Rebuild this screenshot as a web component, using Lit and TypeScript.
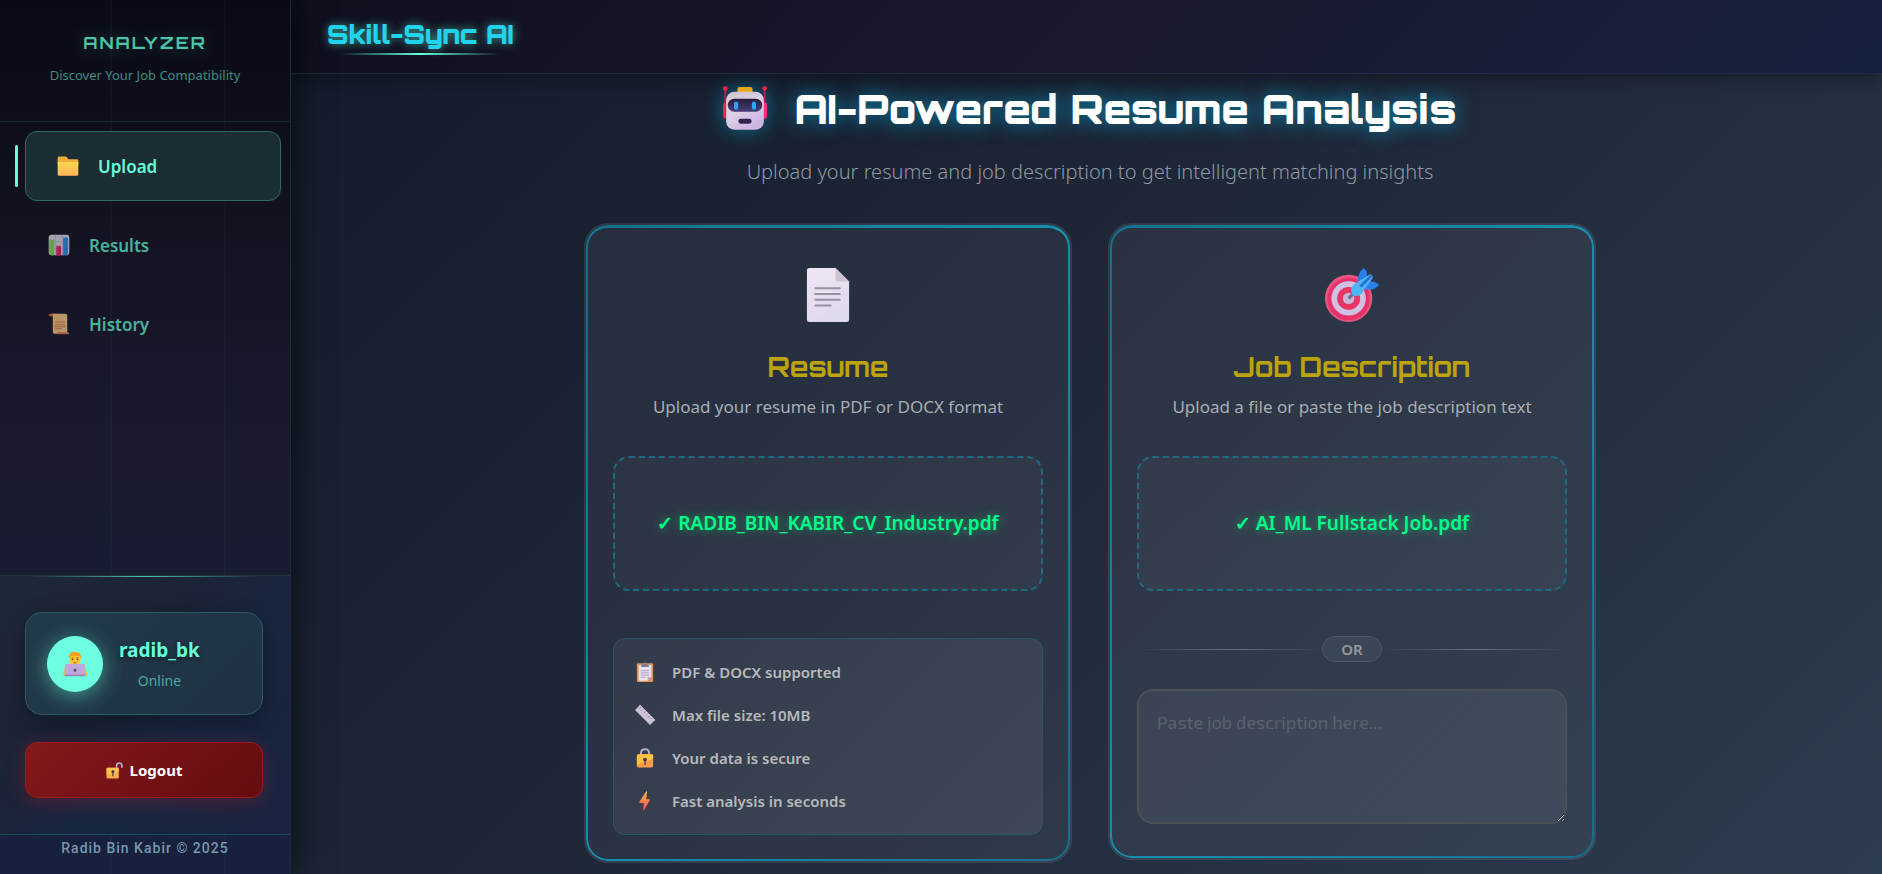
import { LitElement, html, css, svg } from "lit";
import { customElement, property, state } from "lit/decorators.js";
import { classMap } from "lit/directives/class-map.js";

const glyphs: Record<string, unknown> = {
  folder: svg`
    <defs><linearGradient id="fo" x1="0" y1="0" x2="0" y2="1"><stop offset="0" stop-color="#ffd84a"/><stop offset="1" stop-color="#ffb45c"/></linearGradient></defs>
    <path d="M1 4q0-2 2-2h9q1.500 0 2.500 1.200L16.500 6H29q2 0 2 2v6H1z" fill="#f3ab3a"/>
    <path d="M1 10h30v18.500q0 1.500-1.500 1.500h-27Q1 30 1 28.500z" fill="url(#fo)"/>`,
  chart: svg`
    <rect x="1" y="1" width="30" height="30" rx="4" fill="#d6cfe0"/>
    <path d="M1 11h30M1 21h30M11 1v30M21 1v30" stroke="#b3aac0" stroke-width="1"/>
    <path d="M2 10q0-2 2-2h3q2 0 2 2v21H5q-3 0-3-3z" fill="#7fcf57"/>
    <path d="M12 19q0-2 2-2h3q2 0 2 2v12h-7z" fill="#e0246a"/>
    <path d="M22 7q0-2 2-2h3q2 0 2 2v21q0 3-3 3h-4z" fill="#2a8be0"/>`,
  scroll: svg`
    <rect x="1" y="1" width="14" height="4" rx="2" fill="#c8663d"/>
    <path d="M5 1h20q3 0 3 3v26H9q-2 0-2-2V4q0-2-2-3z" fill="#f1c07d"/>
    <path d="M10 13h15M10 17h15M10 20h15M10 23h10" stroke="#c77a4a" stroke-width="1.600"/>
    <path d="M15 28h14q2 0 2 1.500T29 31H12q3-.500 3-3z" fill="#d2754c"/>`,
  coder: svg`
    <path d="M1 30q0-9 8-11h14q8 2 8 11z" fill="#f7b928"/>
    <ellipse cx="16" cy="10" rx="7" ry="8" fill="#ffc52e"/>
    <path d="M8.500 10Q7.500 1 16 1t7.500 9l-2-4H11z" fill="#f3a11d"/>
    <path d="M11.500 8.500h3M17.500 8.500h3" stroke="#8a5a24" stroke-width="1"/>
    <circle cx="13" cy="10.500" r="1" fill="#5d3b33"/><circle cx="19" cy="10.500" r="1" fill="#5d3b33"/>
    <path d="M13.500 14h5q-2.500 2.500-5 0" fill="#d6303d"/>
    <rect x="3.500" y="16" width="25" height="14.500" rx="1.500" fill="#bfa9d8"/>
    <rect x="3" y="29" width="26" height="2" rx="1" fill="#9a86b8"/>
    <circle cx="16" cy="23.500" r="2" fill="#584a72"/>`,
  unlock: svg`
    <path d="M20 11V7q0-5 5-5t5 5v4" fill="none" stroke="#b9b2c8" stroke-width="3"/>
    <rect x="1" y="11" width="23" height="20" rx="2.500" fill="#fdae4a"/>
    <path d="M1 13.500Q1 11 3.500 11h18q2.500 0 2.500 2.500V18L1 24z" fill="#ffc24b"/>
    <circle cx="13" cy="18.500" r="2.800" fill="#46304f"/><path d="M12 19h2v8h-2z" fill="#46304f"/>`,
  lock: svg`
    <path d="M9.500 13V8q0-6 6.500-6t6.500 6v5" fill="none" stroke="#b8aecb" stroke-width="3"/>
    <rect x="3" y="10" width="26" height="21" rx="2.500" fill="#fb9c4d"/>
    <path d="M3 12.500Q3 10 5.500 10h21q2.500 0 2.500 2.500V17L3 27z" fill="#ffc044"/>
    <circle cx="16" cy="18.500" r="3" fill="#46304f"/><path d="M15 19h2v8h-2z" fill="#46304f"/>`,
  robot: svg`
    <defs>
      <linearGradient id="rb" x1="0" y1="0" x2=".6" y2="1"><stop offset="0" stop-color="#d3cbd3"/><stop offset=".5" stop-color="#ded2e6"/><stop offset="1" stop-color="#cdb4e2"/></linearGradient>
      <linearGradient id="rv" x1="0" y1="0" x2="0" y2="1"><stop offset="0" stop-color="#2b1a3c"/><stop offset="1" stop-color="#464079"/></linearGradient>
    </defs>
    <path d="M1.700 1v13M30.300 1v13" stroke="#b3204e" stroke-width="1.400"/>
    <circle cx="1.700" cy="1" r="1.700" fill="#f0284e"/><circle cx="30.300" cy="1" r="1.700" fill="#f0284e"/>
    <rect x="0" y="11" width="4" height="12" rx="2" fill="#e8244f"/><rect x="28" y="11" width="4" height="12" rx="2" fill="#fb2f78"/>
    <rect x="10.500" y="0" width="11" height="6" rx="1.500" fill="#f5b21d"/>
    <rect x="2.300" y="3.500" width="27.400" height="27.500" rx="6" fill="url(#rb)"/>
    <rect x="3.500" y="8.500" width="25" height="9.500" rx="4.700" fill="url(#rv)"/>
    <rect x="8" y="10.500" width="3" height="6" rx="1.500" fill="#2aa5f5"/><rect x="21" y="10.500" width="3" height="6" rx="1.500" fill="#2aa5f5"/>
    <rect x="11.200" y="23" width="9.600" height="3.700" rx="1.800" fill="#33224a"/>`,
  page: svg`
    <defs><linearGradient id="pg" x1="0" y1="0" x2=".3" y2="1"><stop offset="0" stop-color="#efe6f4"/><stop offset="1" stop-color="#e0d8ec"/></linearGradient></defs>
    <path d="M3.500 1.500Q3.500 0 5 0h15.500L28.500 8v22.500q0 1.500-1.500 1.500H5q-1.500 0-1.500-1.500z" fill="url(#pg)"/>
    <path d="M20.500 0L28.500 8H22q-1.500 0-1.500-1.500z" fill="#cbc3d2"/>
    <path d="M8.500 12h14.500M8.500 15.400h14.500M8.500 18.800h14.500M8.500 22.200h9" stroke="#9990a3" stroke-width="1.200" stroke-linecap="round"/>`,
  target: svg`
    <circle cx="14" cy="18" r="14" fill="#e85580"/><circle cx="14" cy="18.400" r="12.600" fill="#e5326a"/>
    <circle cx="14" cy="18" r="10.200" fill="#cfc1e2"/><circle cx="14" cy="18" r="6.800" fill="#e83363"/>
    <circle cx="14" cy="18" r="3.400" fill="#c7b5d6"/>
    <path d="M14 18l4-4" stroke="#7b6b8e" stroke-width="2"/>
    <path d="M19.500 8.500Q19 3 23 0q2 1.500 2 5zM23 12q5 2.500 9-2-2.500-2.500-6-2z" fill="#2a7fe8"/>
    <path d="M15.500 13.500Q15 11 19 8.500L27 3.500 28.500 5.500 22.500 14Q20 17.500 17 16.500 15.700 15.500 15.500 13.500z" fill="#4fb4f3"/>
    <path d="M21 11l6.500-6.500" stroke="#256fd8" stroke-width="1.600"/>`,
  clipboard: svg`
    <rect x="3" y="2" width="26" height="30" rx="1.500" fill="#e0935c"/>
    <path d="M6 5h20v19l-6 6H6z" fill="#ece4f4"/><path d="M26 24l-6 6v-6z" fill="#c9a6a0"/>
    <path d="M9 14h14M9 17.500h14M9 21h14M9 24.500h8" stroke="#9d93ab" stroke-width="1.300"/>
    <path d="M10 8V4h3.500q0-3.500 2.500-3.500T18.500 4H22v4z" fill="#857b90"/>`,
  ruler: svg`
    <path d="M0 8L8 0 32 24 24 32z" fill="#c9c2d3"/>
    <path d="M8 0L32 24 30.500 25.500 6.500 1.500z" fill="#d9d3e2"/>
    <path d="M10 3l-3 3M13.500 6.500L11.500 8.500M17 10l-3 3M20.500 13.500l-2 2M24 17l-3 3M27.500 20.500l-2 2" stroke="#8b68d8" stroke-width="1.500"/>`,
  bolt: svg`
    <defs><linearGradient id="bo" x1="0" y1="0" x2="0" y2="1"><stop offset="0" stop-color="#ffb54a"/><stop offset=".5" stop-color="#ff8348"/><stop offset="1" stop-color="#f5425a"/></linearGradient></defs>
    <path d="M18 .5q1.500-.8 1.300.8L18 13h5q1.500 0 .8 1.300L14 31.500q-1.200 1-1-.7L14 19H7.500q-1.500 0-.7-1.300z" fill="url(#bo)"/>`,
};

@customElement("emoji-icon")
export class EmojiIcon extends LitElement {
  static styles = css`
    :host { display: block; flex: none; }
    .glyph { display: block; width: 100%; height: 100%; overflow: visible; }
  `;
  @property() name = "";
  render() {
    return html`<svg class="glyph" viewBox="0 0 32 32" aria-hidden="true">${glyphs[this.name]}</svg>`;
  }
}

@customElement("upload-card")
export class UploadCard extends LitElement {
  static styles = css`
    :host { display: block; }
    .card {
      position: relative;
      box-sizing: border-box;
      padding: 43px 27px 26px;
      border: 2px solid rgba(255, 255, 255, 0.05);
      border-radius: 24px;
      background: linear-gradient(135deg, rgba(255, 255, 255, 0.06), rgba(255, 255, 255, 0.05));
      text-align: center;
    }
    .ring {
      position: absolute;
      inset: 0;
      padding: 3px 2px 2px;
      border-radius: 22px;
      background: linear-gradient(45deg, #1590ae, #166c8a 50%, #1590ae);
      mask: linear-gradient(#000 0 0) content-box exclude, linear-gradient(#000 0 0);
      pointer-events: none;
    }
    .icon { width: 54px; height: 54px; margin: 0 auto 24px; }
    .title {
      margin: 0;
      color: #bda30b;
      font: 700 27px/42px Orbitron, "DejaVu Sans", sans-serif;
    }
    .hint {
      margin: 6px 0 36px;
      color: #a9adb3;
      font-size: 17px;
      line-height: 26px;
    }
    .drop {
      display: flex;
      align-items: center;
      justify-content: center;
      box-sizing: border-box;
      min-height: 135px;
      padding: 15px 16px 17px;
      border: 2px dashed #1f6a83;
      border-radius: 16px;
      background: rgba(255, 255, 255, 0.03);
      color: #00ff88;
      font-size: 19px;
      font-weight: 600;
      text-shadow: 0 0 10px rgba(0, 255, 136, 0.5);
      cursor: pointer;
    }
    .file { position: absolute; width: 1px; height: 1px; opacity: 0; }
  `;
  @property() icon = "";
  @property() heading = "";
  @property() hint = "";
  @property() file = "";

  private pick(event: Event) {
    const chosen = (event.target as HTMLInputElement).files?.[0];
    if (chosen) this.file = chosen.name;
  }

  render() {
    return html`
      <section class="card">
        <div class="ring"></div>
        <emoji-icon class="icon" name=${this.icon}></emoji-icon>
        <h2 class="title">${this.heading}</h2>
        <p class="hint">${this.hint}</p>
        <label class="drop">
          <input class="file" type="file" accept=".pdf,.docx" @change=${this.pick} />
          <span>✓ ${this.file}</span>
        </label>
        <slot></slot>
      </section>
    `;
  }
}

@customElement("app-root")
export class AppRoot extends LitElement {
  static styles = css`
    :host {
      display: flex;
      height: 100vh;
      overflow: hidden;
      background: linear-gradient(135deg, #101928, #1d2738 50%, #2e3c4f);
      color: #b5b8bd;
      font-family: "Segoe UI", "Noto Sans", sans-serif;
    }
    a { text-decoration: none; }

    .sidebar {
      position: relative;
      z-index: 3;
      display: flex;
      flex: none;
      flex-direction: column;
      box-sizing: border-box;
      width: 291px;
      border-right: 1px solid #1b2c35;
      background: linear-gradient(180deg, #0a0a14, #1a1a2e 50%, #16213e);
      box-shadow: 4px 0 30px rgba(0, 0, 0, 0.6);
    }
    .lines {
      position: absolute;
      inset: 0;
      background:
        linear-gradient(rgba(100, 255, 218, 0.03) 0 0) 110px 0 / 2px 100% no-repeat,
        linear-gradient(rgba(100, 255, 218, 0.03) 0 0) 224px 0 / 1px 100% no-repeat;
      pointer-events: none;
    }
    .brand {
      box-sizing: border-box;
      height: 122px;
      padding: 30px 16px 0;
      border-bottom: 1px solid #182a30;
      text-align: center;
    }
    .brand-name {
      margin: 0;
      color: #4cc4aa;
      font: 700 17px/26px Orbitron, "DejaVu Sans", sans-serif;
      letter-spacing: 2px;
      text-shadow: 0 0 20px rgba(100, 255, 218, 0.3);
    }
    .brand-line {
      margin: 8px 0 0;
      color: #3c8e81;
      font-size: 13px;
      line-height: 22px;
    }
    .nav {
      display: flex;
      flex: 1;
      flex-direction: column;
      gap: 9px;
      padding: 9px 18px 0 16px;
    }
    .item {
      position: relative;
      display: flex;
      align-items: center;
      gap: 19px;
      box-sizing: border-box;
      height: 70px;
      padding: 0 31px;
      border: 1px solid transparent;
      border-radius: 12px;
      color: #48b39c;
      font-size: 17px;
      font-weight: 600;
    }
    .item-icon { width: 22px; height: 22px; opacity: 0.75; }
    .active {
      border-color: #2d6c63;
      background: #1c2d34;
      color: #64ffda;
      transform: translateX(9px);
    }
    .active .item-icon { opacity: 1; }
    .active::before {
      content: "";
      position: absolute;
      top: 13px;
      bottom: 13px;
      left: -11px;
      width: 3px;
      border-radius: 2px;
      background: #64ffda;
    }
    .account {
      position: relative;
      padding: 36px 27px 36px 25px;
      border-top: 1px solid #27323f;
      background: linear-gradient(135deg, #1e2937, #1b2338 40%, #18263f 60%, #1a2340);
    }
    .account::before {
      content: "";
      position: absolute;
      top: 0;
      right: 10%;
      left: 10%;
      height: 1px;
      background: linear-gradient(90deg, transparent, #4cc4aa, transparent);
    }
    .profile {
      display: flex;
      align-items: center;
      gap: 16px;
      box-sizing: border-box;
      height: 103px;
      padding: 0 21px;
      border: 1px solid #2b5a61;
      border-radius: 17px;
      background: linear-gradient(135deg, #223b4b, #1f3145);
      box-shadow: 0 8px 24px rgba(0, 0, 0, 0.3);
    }
    .avatar {
      display: grid;
      place-items: center;
      flex: none;
      width: 56px;
      height: 56px;
      border-radius: 50%;
      background: #6dffe0;
      box-shadow: 0 4px 20px rgba(100, 255, 218, 0.5);
    }
    .avatar-icon { width: 26px; height: 26px; }
    .who { text-align: center; }
    .user { color: #64ffda; font-size: 19px; font-weight: 700; line-height: 30px; text-shadow: 0 2px 4px rgba(0, 0, 0, 0.5); }
    .status { color: #49aa9b; font-size: 14px; line-height: 24px; margin-top: 4px; }
    .logout {
      display: flex;
      align-items: center;
      justify-content: center;
      gap: 7px;
      width: 100%;
      height: 56px;
      margin-top: 27px;
      border: 1px solid #981a1d;
      border-radius: 12px;
      background: linear-gradient(135deg, #83191c, #650c10);
      box-shadow: 0 4px 20px rgba(200, 30, 50, 0.3);
      color: #fff;
      font: 700 15px/24px "Segoe UI", "Noto Sans", sans-serif;
      cursor: pointer;
    }
    .logout-icon { width: 17px; height: 17px; }
    .credit {
      box-sizing: border-box;
      height: 40px;
      padding-top: 1px;
      border-top: 1px solid #21495d;
      background: #17203d;
      color: #7798ad;
      font: 500 14px/24px Roboto, sans-serif;
      letter-spacing: 1px;
      text-align: center;
    }

    .page { display: flex; flex: 1; flex-direction: column; min-width: 0; }
    .topbar {
      position: relative;
      z-index: 2;
      flex: none;
      box-sizing: border-box;
      height: 74px;
      padding: 15px 36px 0;
      border-bottom: 1px solid #1d2d3b;
      background: linear-gradient(135deg, #0f0f1e, #1a1a2e 50%, #16213e);
      box-shadow: 0 4px 20px rgba(0, 0, 0, 0.4);
    }
    .logo {
      display: inline-flex;
      flex-direction: column;
      align-items: center;
      color: #22d3ee;
      font: 900 26px/38px Orbitron, "DejaVu Sans", sans-serif;
      text-shadow: 0 0 10px rgba(100, 255, 218, 0.6);
    }
    .logo::after {
      content: "";
      width: 86%;
      height: 2px;
      background: linear-gradient(90deg, transparent, #64ffda, transparent);
    }
    .content { flex: 1; min-height: 0; padding: 5px 16px 0 23px; overflow: hidden; }
    .hero { text-align: center; }
    .hero-title {
      display: flex;
      align-items: center;
      justify-content: center;
      gap: 27px;
      margin: 0;
      color: #fff;
      font: 900 40px/60px Orbitron, "DejaVu Sans", sans-serif;
      text-shadow: 0 0 20px rgba(0, 200, 255, 0.6);
    }
    .hero-icon { width: 44px; height: 44px; filter: drop-shadow(0 0 10px rgba(0, 200, 255, 0.45)); }
    .hero-text { margin: 17px 0 35px; color: #9097a0; font-size: 20px; font-weight: 300; line-height: 32px; }
    .cards {
      display: grid;
      grid-template-columns: repeat(auto-fit, minmax(360px, 1fr));
      align-items: start;
      gap: 36px;
      max-width: 1012px;
      margin: 0 auto;
    }
    .facts {
      margin: 47px 0 0;
      padding: 11px 20px 12px 21px;
      border: 1px solid #28576b;
      border-radius: 12px;
      background: linear-gradient(135deg, rgba(255, 255, 255, 0.05), rgba(255, 255, 255, 0.08));
      list-style: none;
    }
    .fact {
      display: flex;
      align-items: center;
      gap: 17px;
      height: 43px;
      color: #b7b9bc;
      font-size: 15px;
      font-weight: 600;
    }
    .fact-icon { width: 20px; height: 20px; }
    .or { display: flex; align-items: center; margin: 45px 0 27px; }
    .or::before, .or::after {
      content: "";
      flex: 1;
      height: 1px;
      background: linear-gradient(90deg, transparent, #66717a, transparent);
    }
    .or-text {
      box-sizing: border-box;
      width: 60px;
      border: 1px solid #4d5966;
      border-radius: 14px;
      background: #3a4656;
      color: #96989c;
      font-size: 15px;
      font-weight: 600;
      line-height: 24px;
      text-align: center;
    }
    .paste {
      display: block;
      box-sizing: border-box;
      width: 100%;
      height: 135px;
      margin-bottom: 8px;
      padding: 18px;
      border: 2px solid #4b5057;
      border-radius: 16px;
      background: rgba(255, 255, 255, 0.06);
      color: #d0d4da;
      font: 18px/26px "Exo 2", "Noto Sans", sans-serif;
      resize: vertical;
    }
    .paste::placeholder { color: #5b626d; }
  `;

  @state() private current = "Upload";

  private nav = [
    ["Upload", "folder"],
    ["Results", "chart"],
    ["History", "scroll"],
  ];
  private facts = [
    ["clipboard", "PDF & DOCX supported"],
    ["ruler", "Max file size: 10MB"],
    ["lock", "Your data is secure"],
    ["bolt", "Fast analysis in seconds"],
  ];

  render() {
    return html`
      <aside class="sidebar">
        <div class="lines"></div>
        <header class="brand">
          <h2 class="brand-name">ANALYZER</h2>
          <p class="brand-line">Discover Your Job Compatibility</p>
        </header>
        <nav class="nav">
          ${this.nav.map(
            ([label, icon]) => html`
              <a class=${classMap({ item: true, active: label === this.current })} href="#${label.toLowerCase()}"
                @click=${() => (this.current = label)}>
                <emoji-icon class="item-icon" name=${icon}></emoji-icon>${label}
              </a>`
          )}
        </nav>
        <div class="account">
          <div class="profile">
            <div class="avatar"><emoji-icon class="avatar-icon" name="coder"></emoji-icon></div>
            <div class="who">
              <div class="user">radib_bk</div>
              <div class="status">Online</div>
            </div>
          </div>
          <button class="logout" type="button">
            <emoji-icon class="logout-icon" name="unlock"></emoji-icon>Logout
          </button>
        </div>
        <footer class="credit">Radib Bin Kabir © 2025</footer>
      </aside>
      <div class="page">
        <header class="topbar"><a class="logo" href="#home">Skill-Sync AI</a></header>
        <main class="content">
          <div class="hero">
            <h1 class="hero-title">
              <emoji-icon class="hero-icon" name="robot"></emoji-icon>
              <span>AI-Powered Resume Analysis</span>
            </h1>
            <p class="hero-text">Upload your resume and job description to get intelligent matching insights</p>
          </div>
          <div class="cards">
            <upload-card icon="page" heading="Resume" hint="Upload your resume in PDF or DOCX format"
              file="RADIB_BIN_KABIR_CV_Industry.pdf">
              <ul class="facts">
                ${this.facts.map(
                  ([icon, text]) => html`
                    <li class="fact"><emoji-icon class="fact-icon" name=${icon}></emoji-icon>${text}</li>`
                )}
              </ul>
            </upload-card>
            <upload-card icon="target" heading="Job Description" hint="Upload a file or paste the job description text"
              file="AI_ML Fullstack Job.pdf">
              <div class="or"><span class="or-text">OR</span></div>
              <textarea class="paste" aria-label="Job description" placeholder="Paste job description here..."></textarea>
            </upload-card>
          </div>
        </main>
      </div>
    `;
  }
}
